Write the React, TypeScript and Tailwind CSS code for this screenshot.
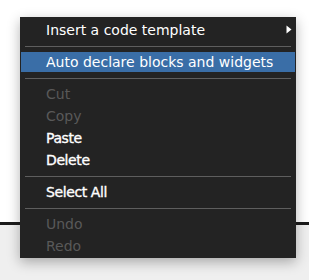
import React from 'react';

type Item = { label: string; state?: 'normal' | 'bold' | 'disabled' | 'active'; submenu?: boolean };

const groups: Item[][] = [
  [{ label: 'Insert a code template', submenu: true }],
  [{ label: 'Auto declare blocks and widgets', state: 'active' }],
  [
    { label: 'Cut', state: 'disabled' },
    { label: 'Copy', state: 'disabled' },
    { label: 'Paste', state: 'bold' },
    { label: 'Delete', state: 'bold' },
  ],
  [{ label: 'Select All', state: 'bold' }],
  [
    { label: 'Undo', state: 'disabled' },
    { label: 'Redo', state: 'disabled' },
  ],
];

const rowText = {
  normal: 'pl-[26px] text-white',
  active: 'mx-px pl-[25px] bg-[#3a6ea7] text-white',
  disabled: 'pl-[26px] text-[#595959]',
  bold: 'pl-[26px] text-white tracking-[-0.4px] [-webkit-text-stroke:0.35px_#ffffff]',
};

const MenuRow = ({ item }: { item: Item }) => {
  const state = item.state ?? 'normal';
  return (
    <div className="relative h-[22px] py-px">
      <div className={'flex h-full items-center pr-3 ' + rowText[state]}>{item.label}</div>
      {item.submenu && (
        <svg className="absolute right-[4px] top-[6px]" width="6" height="9" viewBox="0 0 6 9">
          <path d="M0.5 0.5 L5.5 4.5 L0.5 8.5 Z" fill="#ffffff" />
        </svg>
      )}
    </div>
  );
};

const App = () => {
  return (
    <div className="relative w-[309px] h-[280px] overflow-hidden bg-white" style={{ fontFamily: '"DejaVu Sans", sans-serif' }}>
      {/* page behind the popup */}
      <div className="flex flex-col h-full">
        <div className="h-[222px] bg-white" />
        <div className="h-[3px] bg-[#1b1b1b]" />
        <div className="flex-1 bg-[#efefef]" />
      </div>

      {/* context menu */}
      <div className="absolute left-[20px] top-[17px] w-[276px] bg-[#232323] pt-[2px] pb-px text-[14px] leading-none shadow-[0_4px_12px_rgba(0,0,0,0.3)]">
        {groups.map((group, gi) => (
          <div key={gi}>
            {gi > 0 && (
              <div className="h-[10px] px-[5px] pt-[5px]">
                <div className="h-px bg-[#5e5e5e]" />
              </div>
            )}
            {group.map((item) => (
              <MenuRow key={item.label} item={item} />
            ))}
          </div>
        ))}
      </div>
    </div>
  );
};

export default App;
